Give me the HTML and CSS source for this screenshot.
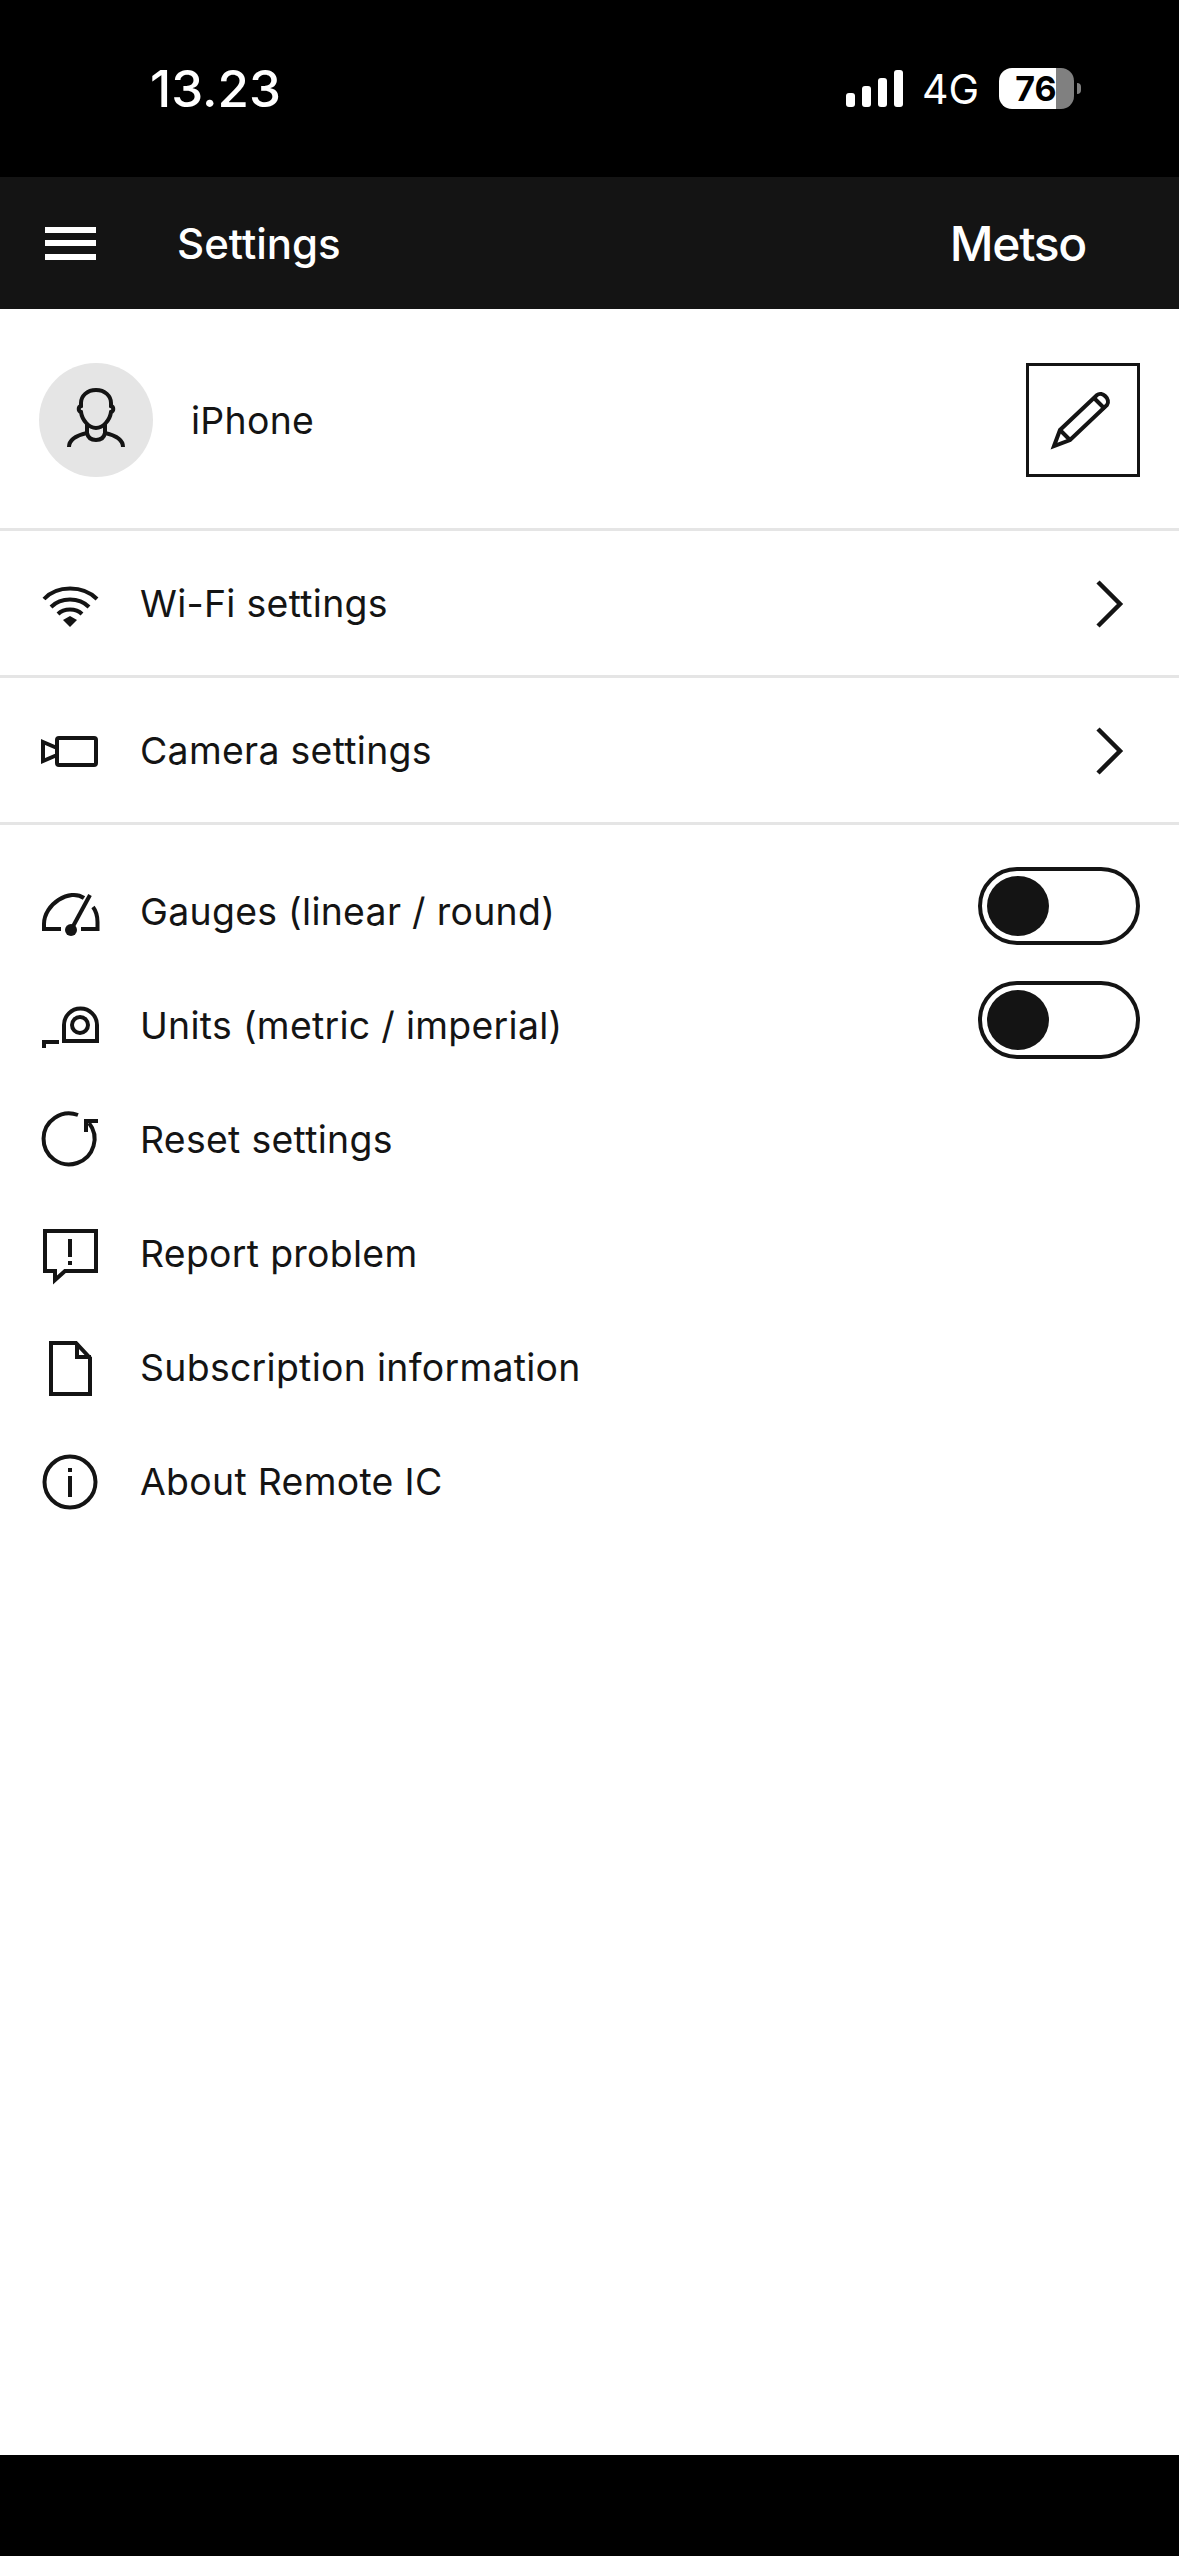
FILE: index.html
```html
<!DOCTYPE html>
<html lang="en">
<head>
<meta charset="utf-8">
<title>Settings</title>
<meta name="viewport" content="width=device-width,initial-scale=1">
<link rel="stylesheet" href="styles.css">
</head>
<body>

<!-- status bar -->
<div class="status">
  <span class="time">13.23</span>
  <div class="status-right">
    <div class="signal"><i></i><i></i><i></i><i></i></div>
    <span class="net">4G</span>
    <div class="battery"><span>76</span></div>
    <div class="battery-nub"></div>
  </div>
</div>

<!-- app header -->
<header class="topbar">
  <div class="burger"><i></i><i></i><i></i></div>
  <h1>Settings</h1>
  <span class="brand">Metso</span>
</header>

<main>
  <section class="profile">
    <div class="avatar">
      <svg class="icon" viewBox="0 0 66 66"><path d="M33 3C24 3 18 9 18 16V19C15 20 15 24 18 25C19 33 26 41 33 41C40 41 47 33 48 25C51 24 51 20 48 19V16C48 9 42 3 33 3Z"/><path d="M6 60C6 52 15 48 24 46C25 51 29 53 33 53C37 53 41 51 42 46C51 48 60 52 60 60"/><path d="M24 37V46M42 37V46"/></svg>
    </div>
    <span class="device">iPhone</span>
    <button class="edit" aria-label="Edit">
      <svg class="icon" viewBox="0 0 66 66"><path d="M4 59L10 43L47 8C52 4 61 12 57 18L20 53Z"/><path d="M10 43L20 53M44 11L55 22"/></svg>
    </button>
  </section>

  <a class="nav-row">
    <svg class="icon" viewBox="0 0 66 66"><path d="M7 29C20 15 46 15 60 29M14 37C24 27 42 27 52 37M21 44C27 38 39 38 45 44"/><path class="solid" d="M26 50L33 46L40 50L33 57Z"/></svg>
    <span>Wi-Fi settings</span>
    <svg class="chevron" viewBox="0 0 30 50"><path d="M4 3L26 25L4 47"/></svg>
  </a>
  <a class="nav-row">
    <svg class="icon" viewBox="0 0 66 66"><rect x="20" y="21" width="39" height="27" rx="2"/><path d="M6 25L20 31V38L6 44Z"/></svg>
    <span>Camera settings</span>
    <svg class="chevron" viewBox="0 0 30 50"><path d="M4 3L26 25L4 47"/></svg>
  </a>

  <ul class="options">
    <li>
      <svg class="icon" viewBox="0 0 66 66"><path d="M24 51H7V46C7 26 33 10 47 20M56 29C59 33 60.500 39 60.500 44V51H44"/><path d="M34 52L53 17"/><circle class="solid" cx="34" cy="52" r="6"/></svg>
      <span>Gauges (linear / round)</span>
      <div class="toggle"><i></i></div>
    </li>
    <li>
      <svg class="icon" viewBox="0 0 66 66"><path d="M27 49V33A16.500 16.500 0 0 1 60 33V49Z"/><circle cx="43" cy="33" r="8"/><path d="M22 50H7V56"/></svg>
      <span>Units (metric / imperial)</span>
      <div class="toggle"><i></i></div>
    </li>
    <li>
      <svg class="icon" viewBox="0 0 66 66"><path d="M41 9A25.500 25.500 0 1 0 52 17"/><path d="M49 26V15H61"/></svg>
      <span>Reset settings</span>
    </li>
    <li>
      <svg class="icon" viewBox="0 0 66 66"><path d="M8 11H59V51H28L18 60V51H8Z"/><path d="M33 19V37M33 41V45"/></svg>
      <span>Report problem</span>
    </li>
    <li>
      <svg class="icon" viewBox="0 0 66 66"><path d="M14 9H39L53 24V60H14Z"/><path d="M40 9V23H54"/></svg>
      <span>Subscription information</span>
    </li>
    <li>
      <svg class="icon" viewBox="0 0 66 66"><circle cx="33" cy="34" r="25.500"/><path d="M33 28V49M33 20V24"/></svg>
      <span>About Remote IC</span>
    </li>
  </ul>
</main>

<div class="home-bar"></div>

</body>
</html>
```

FILE: styles.css
```css
:root{--ink:#141414;--line:#e5e5e5}
*{box-sizing:border-box;margin:0;padding:0}
html,body{height:100%}
body{display:flex;flex-direction:column;background:#fff;color:var(--ink);font-family:Inter,"Liberation Sans",sans-serif;overflow:hidden}

/* status bar */
.status{height:177px;background:#000;color:#fff;display:flex;align-items:center;justify-content:space-between;padding:0 98px 0 150px;flex:none}
.time{font-size:51px;font-weight:500}
.status-right{display:flex;align-items:center}
.signal{display:flex;align-items:flex-end;gap:7px;height:37px;margin-right:19px}
.signal i{width:9px;border-radius:3px;background:#fff}
.signal i:nth-child(1){height:14px}
.signal i:nth-child(2){height:21px}
.signal i:nth-child(3){height:29px}
.signal i:nth-child(4){height:37px}
.net{font-size:41px;margin-right:20px}
.battery{width:75px;height:41px;border-radius:13px;background:linear-gradient(90deg,#fff 76%,#808080 76%);display:flex;align-items:center;justify-content:center;padding-right:1px}
.battery span{color:#000;font-size:34px;font-weight:700}
.battery-nub{width:4px;height:11px;margin-left:3px;background:#808080;border-radius:0 4px 4px 0}

/* header */
.topbar{height:132px;background:var(--ink);color:#fff;display:flex;align-items:center;padding:0 93px 0 45px;flex:none}
.burger{width:51px;height:33px;display:flex;flex-direction:column;justify-content:space-between;margin-right:81px;flex:none}
.burger i{height:6px;background:#fff}
.topbar h1{font-size:42px;font-weight:500}
.brand{margin-left:auto;font-size:48px;font-weight:500;letter-spacing:-1.3px}

main{flex:1;min-height:0}

/* icons */
.icon{width:66px;height:66px;flex:none;fill:none;stroke:var(--ink);stroke-width:4}
.icon .solid{fill:var(--ink);stroke:none}

.profile{display:flex;align-items:center;padding:54px 39px 51px;border-bottom:3px solid var(--line)}
.avatar{width:114px;height:114px;border-radius:50%;background:var(--line);display:flex;align-items:center;justify-content:center}
.device{font-size:37.4px;margin-left:38px;letter-spacing:.3px}
.edit{width:114px;height:114px;margin-left:auto;border:3px solid var(--ink);background:#fff;display:flex;align-items:center;justify-content:center}

.nav-row{display:flex;align-items:center;height:147px;padding:0 55px 0 37px;border-bottom:3px solid var(--line)}
.nav-row span,.options span{font-size:37.4px;margin-left:37px;letter-spacing:.3px}
.chevron{width:30px;height:50px;margin:2px 0 0 auto;fill:none;stroke:var(--ink);stroke-width:4.5}

.options{list-style:none;padding-top:29px}
.options li{display:flex;align-items:center;height:114px;padding:0 39px 0 37px}
.toggle{width:162px;height:78px;margin:-10px 0 0 auto;border:4px solid var(--ink);border-radius:39px;padding:5px}
.toggle i{display:block;width:62px;height:60px;border-radius:50%;background:var(--ink)}

.home-bar{height:101px;background:#000;flex:none}
```
